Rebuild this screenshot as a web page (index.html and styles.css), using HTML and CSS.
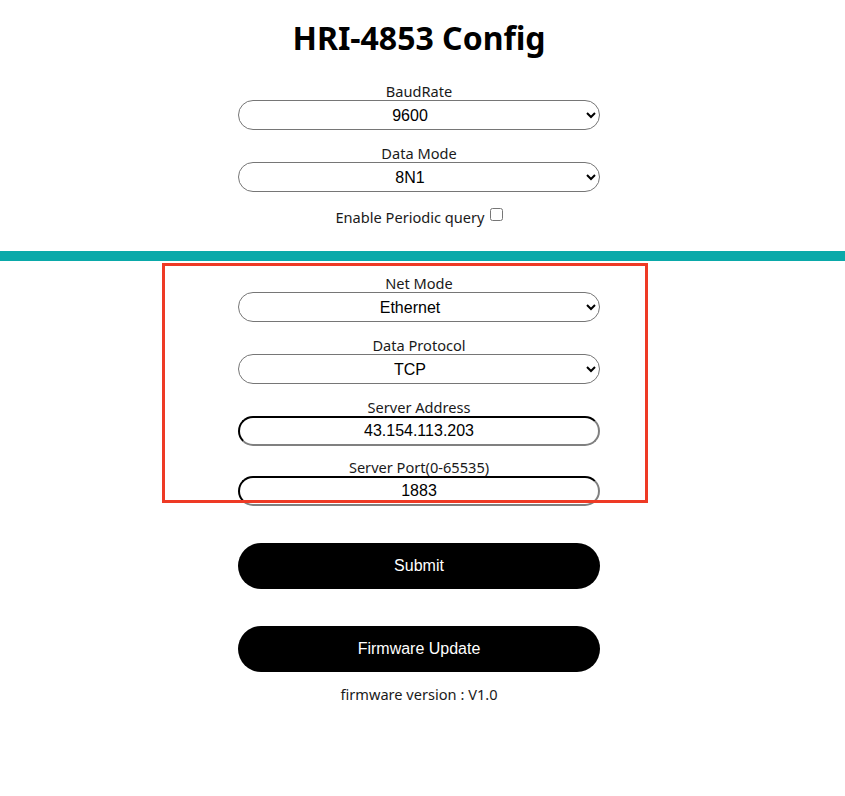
FILE: index.html
```html
<!DOCTYPE html>
<html>
<head>
<meta charset="utf-8">
<title>HRI-4853 Config</title>
<link rel="stylesheet" href="styles.css">
</head>
<body>
<div class="page">
  <h1 class="title">HRI-4853 Config</h1>
  <section class="group">
    <div class="field">
      <label class="label">BaudRate</label>
      <select class="ctl sel"><option>9600</option></select>
    </div>
    <div class="field">
      <label class="label">Data Mode</label>
      <select class="ctl sel"><option>8N1</option></select>
    </div>
    <div class="check-row">
      <span class="label">Enable Periodic query</span>
      <input type="checkbox" class="chk">
    </div>
  </section>
  <div class="bar"></div>
  <section class="group net">
    <div class="field">
      <label class="label">Net Mode</label>
      <select class="ctl sel"><option>Ethernet</option></select>
    </div>
    <div class="field">
      <label class="label">Data Protocol</label>
      <select class="ctl sel"><option>TCP</option></select>
    </div>
    <div class="field">
      <label class="label">Server Address</label>
      <input class="ctl inp" type="text" value="43.154.113.203">
    </div>
    <div class="field last">
      <label class="label">Server Port(0-65535)</label>
      <input class="ctl inp" type="text" value="1883">
    </div>
    <div class="highlight"></div>
  </section>
  <section class="actions">
    <button class="btn">Submit</button>
    <button class="btn">Firmware Update</button>
    <div class="version">firmware version : V1.0</div>
  </section>
</div>
</body>
</html>
```
FILE: styles.css
```css
html, body {
  margin: 0;
  padding: 0;
  background: #ffffff;
}
.page {
  display: flex;
  flex-direction: column;
  align-items: center;
  padding-right: 7px;
  font-family: "Noto Sans", "Open Sans", sans-serif;
  color: #1a1a1a;
}
.title {
  margin: 16px 0 0 0;
  font-family: "Noto Sans", sans-serif;
  font-weight: 700;
  font-size: 32px;
  line-height: 44px;
  color: #000;
}
.group {
  display: flex;
  flex-direction: column;
  align-items: center;
  width: 362px;
}
.field {
  display: flex;
  flex-direction: column;
  align-items: center;
  width: 100%;
  margin-top: 14px;
}
.group .field:first-child {
  margin-top: 22px;
}
.label {
  font-size: 14.6px;
  line-height: 18px;
  color: #1a1a1a;
}
.ctl {
  box-sizing: border-box;
  width: 362px;
  height: 30px;
  margin: 0;
  border-radius: 15px;
  font-family: "Liberation Sans", Arial, sans-serif;
  font-size: 16px;
  color: #000;
  background: #fff;
  text-align: center;
  text-align-last: center;
}
.sel {
  border: 1px solid #767676;
  padding: 0 18px 0 12px;
}
.inp {
  border: 2px inset #767676;
  border-top-color: #1a1a1a;
  border-left-color: #1a1a1a;
  border-bottom-color: #808080;
  border-right-color: #808080;
  padding: 0 10px;
}
.check-row {
  display: flex;
  align-items: center;
  gap: 5px;
  margin-top: 16px;
}
.chk {
  width: 13px;
  height: 13px;
  margin: 0;
  position: relative;
  top: -3px;
}
.bar {
  align-self: stretch;
  margin-right: -7px;
  height: 10px;
  background: #0aa9a9;
  margin-top: 25px;
}
.net {
  position: relative;
}
.net .field:first-child {
  margin-top: 13px;
}
.net .field.last {
  margin-top: 12px;
}
.highlight {
  position: absolute;
  left: -76px;
  top: 2px;
  width: 486px;
  height: 240px;
  box-sizing: border-box;
  border: 3px solid #ee3a25;
  pointer-events: none;
}
.actions {
  display: flex;
  flex-direction: column;
  align-items: center;
  width: 362px;
  margin-top: 37px;
}
.btn {
  width: 362px;
  height: 46px;
  border: none;
  border-radius: 23px;
  background: #000;
  color: #fff;
  font-family: "Liberation Sans", Arial, sans-serif;
  font-size: 16px;
  margin: 0 0 37px 0;
}
.btn + .btn {
  margin-bottom: 13px;
}
.version {
  font-size: 14.6px;
  line-height: 18px;
  color: #1a1a1a;
}
```
